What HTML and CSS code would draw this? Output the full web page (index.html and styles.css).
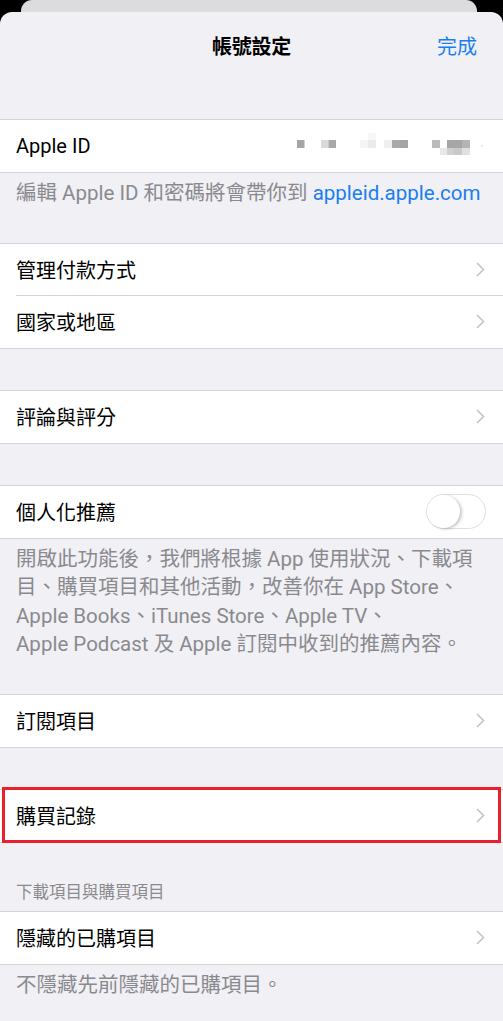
FILE: index.html
```html
<!DOCTYPE html>
<html lang="zh-Hant">
<head>
  <meta charset="UTF-8">
  <title>帳號設定</title>
  <link rel="stylesheet" href="styles.css">
</head>
<body>

  <div class="back-card"></div>

  <div class="sheet">
    <header class="nav">
      <span></span>
      <h1 class="nav-title">帳號設定</h1>
      <a class="nav-done">完成</a>
    </header>

    <section class="group first">
      <div class="row">
        <div class="row-body">
          <span class="label">Apple ID</span>
          <svg class="blur" width="190" height="24" viewBox="0 0 190 24">
            <rect x="1" y="7" width="7.5" height="8" fill="#a5a5a5"/>
            <rect x="25" y="7" width="7.5" height="8" fill="#dadada"/>
            <rect x="32.5" y="7" width="7.5" height="8" fill="#a8a8a8"/>
            <rect x="64" y="7" width="8" height="8" fill="#f5f5f5"/>
            <rect x="72" y="0" width="8" height="7" fill="#f7f7f7"/>
            <rect x="72" y="7" width="8" height="8" fill="#ebebeb"/>
            <rect x="88" y="7" width="8" height="8" fill="#efefef"/>
            <rect x="96" y="7" width="8" height="8" fill="#a9a9a9"/>
            <rect x="104" y="7" width="8" height="8" fill="#a4a4a4"/>
            <rect x="136" y="7" width="8" height="8" fill="#bababa"/>
            <rect x="151" y="7" width="15" height="8" fill="#a6a6a6"/>
            <rect x="166" y="7" width="8" height="8" fill="#b3b3b3"/>
            <rect x="144" y="15" width="7" height="7" fill="#e8e8e8"/>
            <rect x="151" y="15" width="7" height="7" fill="#d0d0d0"/>
            <rect x="158" y="15" width="8" height="7" fill="#c8c8c8"/>
            <rect x="166" y="15" width="8" height="7" fill="#e0e0e0"/>
            <rect x="185" y="12" width="1.5" height="1.5" fill="#dddddd"/>
          </svg>
        </div>
      </div>
    </section>
    <p class="footer">編輯 Apple ID 和密碼將會帶你到 <a class="link">appleid.apple.com</a></p>

    <section class="group">
      <div class="row">
        <div class="row-body">
          <span class="label">管理付款方式</span>
          <svg class="chevron" width="9" height="15" viewBox="0 0 9 15"><polyline points="1,1 7.5,7.5 1,14" /></svg>
        </div>
      </div>
      <div class="row">
        <div class="row-body">
          <span class="label">國家或地區</span>
          <svg class="chevron" width="9" height="15" viewBox="0 0 9 15"><polyline points="1,1 7.5,7.5 1,14" /></svg>
        </div>
      </div>
    </section>

    <section class="group spaced">
      <div class="row">
        <div class="row-body">
          <span class="label">評論與評分</span>
          <svg class="chevron" width="9" height="15" viewBox="0 0 9 15"><polyline points="1,1 7.5,7.5 1,14" /></svg>
        </div>
      </div>
    </section>

    <section class="group spaced">
      <div class="row">
        <div class="row-body">
          <span class="label">個人化推薦</span>
          <span class="switch"></span>
        </div>
      </div>
    </section>
    <p class="footer">開啟此功能後，我們將根據 App 使用狀況、下載項<br>目、購買項目和其他活動，改善你在 App Store、<br>Apple Books、iTunes Store、Apple TV、<br>Apple Podcast 及 Apple 訂閱中收到的推薦內容。</p>

    <section class="group">
      <div class="row">
        <div class="row-body">
          <span class="label">訂閱項目</span>
          <svg class="chevron" width="9" height="15" viewBox="0 0 9 15"><polyline points="1,1 7.5,7.5 1,14" /></svg>
        </div>
      </div>
    </section>

    <section class="group spaced highlight">
      <div class="row">
        <div class="row-body">
          <span class="label">購買記錄</span>
          <svg class="chevron" width="9" height="15" viewBox="0 0 9 15"><polyline points="1,1 7.5,7.5 1,14" /></svg>
        </div>
      </div>
    </section>

    <h2 class="section-header">下載項目與購買項目</h2>
    <section class="group">
      <div class="row">
        <div class="row-body">
          <span class="label">隱藏的已購項目</span>
          <svg class="chevron" width="9" height="15" viewBox="0 0 9 15"><polyline points="1,1 7.5,7.5 1,14" /></svg>
        </div>
      </div>
    </section>
    <p class="footer">不隱藏先前隱藏的已購項目。</p>
  </div>

</body>
</html>
```

FILE: styles.css
```css
html, body { margin: 0; padding: 0; }
body {
  background: #000;
  font-family: Roboto, "Noto Sans CJK TC", sans-serif;
  color: #000;
  height: 1021px;
  overflow: hidden;
}

.back-card { height: 12px; margin: 0 26px 0 21px; background: #dcdcde; border-radius: 11px 11px 0 0; }

.sheet { background: #f0f0f5; border-radius: 12px 12px 0 0; min-height: 1009px; }

.nav { height: 66px; display: grid; grid-template-columns: 1fr auto 1fr; align-items: center; }
.nav-title { margin: 0; font-size: 20px; font-weight: 700; letter-spacing: -0.3px; }
.nav-done { justify-self: end; margin-right: 26px; font-size: 20px; color: #1a7ef0; }

.group { background: #fff; border-top: 1px solid #d4d4d8; border-bottom: 1px solid #d4d4d8; position: relative; }
.group.first { margin-top: 41px; }
.group.spaced { margin-top: 41.5px; }

.row { padding-left: 16px; }
.row-body { height: 51.5px; display: flex; align-items: center; justify-content: space-between; padding-right: 18px; }
.row + .row .row-body { border-top: 1px solid #d4d4d8; }

.label { font-size: 20px; }

.chevron polyline { fill: none; stroke: #c4c4c8; stroke-width: 1.6; }

.blur { margin-right: -1px; margin-top: -2px; }

.switch { position: relative; width: 58px; height: 33px; border: 1.5px solid #e0e0e3; border-radius: 18px; background: #fff; margin-right: -1px; }
.switch::after {
  content: ""; position: absolute; left: 0; top: 0; width: 33px; height: 33px;
  border-radius: 50%; background: #fff;
  box-shadow: 2px 1px 3px rgba(0, 0, 0, 0.22);
}

.footer { margin: 0; padding: 6px 16px 35.5px; font-size: 20.5px; line-height: 28.5px; color: #8a8a8e; white-space: nowrap; }
.link { color: #1a7ef0; }

.section-header { margin: 0; padding: 40.5px 16px 8px; font-size: 16.5px; line-height: 20px; font-weight: 400; color: #8a8a8e; }

.highlight::after {
  content: ""; position: absolute; left: 2px; right: 2px; top: -3px; bottom: -1px;
  border: 3px solid #e8202b;
}
```
